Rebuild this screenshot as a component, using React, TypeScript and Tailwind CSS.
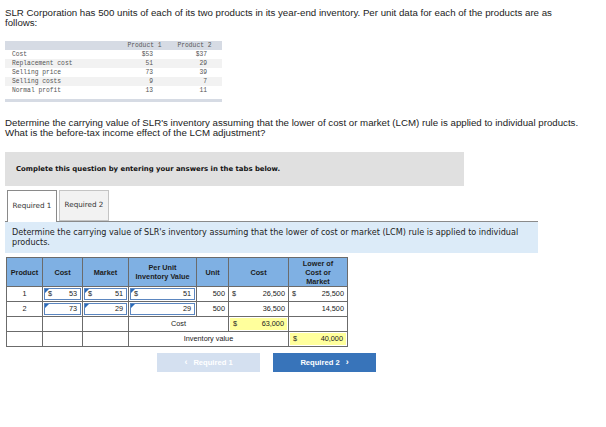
import React from "react"

const dataRows = [
  { label: "Cost", p1: "$53", p2: "$37" },
  { label: "Replacement cost", p1: "51", p2: "29" },
  { label: "Selling price", p1: "73", p2: "39" },
  { label: "Selling costs", p1: "9", p2: "7" },
  { label: "Normal profit", p1: "13", p2: "11" },
]

function Marker() {
  return (
    <span className="absolute left-0 top-0 w-0 h-0 border-t-[4px] border-r-[4px] border-t-[#2a6ab8] border-r-transparent" />
  )
}

function Input({ value, dollar }: { value: string; dollar?: boolean }) {
  return (
    <div className="relative m-[1px] h-[12px] border border-[#5b86c0] bg-white flex items-center justify-between px-[3px]">
      <Marker />
      <span>{dollar ? "$" : ""}</span>
      <span>{value}</span>
    </div>
  )
}

function Money({ value, dollar }: { value: string; dollar?: boolean }) {
  return (
    <div className="flex items-center justify-between px-[3px]">
      <span>{dollar ? "$" : ""}</span>
      <span>{value}</span>
    </div>
  )
}

function Yellow({ value }: { value: string }) {
  return (
    <div className="m-[1px] h-[12px] bg-[#ffff9c] flex items-center justify-between px-[3px]">
      <span>$</span>
      <span>{value}</span>
    </div>
  )
}

export default function App() {
  const cell = "border border-[#6b6b6b] p-0 h-[14.5px]"
  const head = "border border-[#6b6b6b] bg-[#7fb0e3] font-bold text-[#1c1c1c] leading-[9px]"

  return (
    <div className="w-[606px] h-[427px] bg-white px-[5px] pt-[8px] text-[#222]">
      <p className="w-[570px] font-['Liberation_Sans',sans-serif] text-[9.7px] leading-[10px]">
        SLR Corporation has 500 units of each of its two products in its year-end inventory. Per unit data for each of the products are as follows:
      </p>

      <div className="mt-[13px] w-[217px] font-['Liberation_Mono',monospace] text-[6.3px] text-[#555]">
        <div className="h-[9px] bg-[#d6dbe4] flex items-center">
          <span className="w-[117px]" />
          <span className="w-[45px] text-center">Product 1</span>
          <span className="w-[55px] text-center">Product 2</span>
        </div>
        {dataRows.map((r, i) => (
          <div key={r.label} className={`h-[9px] flex items-center ${i % 2 === 1 ? "bg-[#f2f2f2]" : "bg-white"}`}>
            <span className="w-[117px] pl-[7px]">{r.label}</span>
            <span className="w-[31px] text-right">{r.p1}</span>
            <span className="w-[54px] text-right">{r.p2}</span>
          </div>
        ))}
        <div className="mt-[4px] h-[3px] bg-[#d6dbe4]" />
      </div>

      <p className="mt-[16px] font-['Liberation_Sans',sans-serif] text-[9.7px] leading-[10px]">
        Determine the carrying value of SLR's inventory assuming that the lower of cost or market (LCM) rule is applied to individual products.
        <br />
        What is the before-tax income effect of the LCM adjustment?
      </p>

      <div className="mt-[14px] w-[459px] h-[34px] bg-[#e0e0e0] flex items-center pl-[11px] font-['DejaVu_Sans',sans-serif] font-bold text-[6.9px] text-[#111]">
        Complete this question by entering your answers in the tabs below.
      </div>

      <div className="mt-[4px] flex gap-[2px] pl-[2px] font-['DejaVu_Sans',sans-serif] text-[7.2px] text-[#333]">
        <div className="relative z-10 -mb-px w-[50px] h-[32px] bg-white border border-b-0 border-[#8a8a8a] flex items-center justify-center">
          Required 1
        </div>
        <div className="w-[50px] h-[31px] bg-[#f2f2f2] border border-[#c4c4c4] flex items-center justify-center">
          Required 2
        </div>
      </div>
      <div className="w-[533px] h-[32px] bg-[#dcebf8] border-t border-[#8a8a8a] px-[7px] pt-[5px] font-['DejaVu_Sans',sans-serif] text-[8.1px] leading-[10px] text-[#222]">
        Determine the carrying value of SLR's inventory assuming that the lower of cost or market (LCM) rule is applied to individual products.
      </div>

      <table className="mt-[4px] ml-px border-collapse font-['Liberation_Sans',sans-serif] text-[7.3px] text-[#222] table-fixed">
        <colgroup>
          <col className="w-[36px]" />
          <col className="w-[40px]" />
          <col className="w-[46px]" />
          <col className="w-[68px]" />
          <col className="w-[32px]" />
          <col className="w-[60px]" />
          <col className="w-[59px]" />
        </colgroup>
        <thead>
          <tr className="h-[29px]">
            <th className={head}>Product</th>
            <th className={head}>Cost</th>
            <th className={head}>Market</th>
            <th className={head}>Per Unit<br />Inventory Value</th>
            <th className={head}>Unit</th>
            <th className={head}>Cost</th>
            <th className={head}>Lower of<br />Cost or<br />Market</th>
          </tr>
        </thead>
        <tbody>
          <tr>
            <td className={`${cell} text-center`}>1</td>
            <td className={cell}><Input value="53" dollar /></td>
            <td className={cell}><Input value="51" dollar /></td>
            <td className={cell}><Input value="51" dollar /></td>
            <td className={`${cell} text-right pr-[3px]`}>500</td>
            <td className={cell}><Money value="26,500" dollar /></td>
            <td className={cell}><Money value="25,500" dollar /></td>
          </tr>
          <tr>
            <td className={`${cell} text-center`}>2</td>
            <td className={cell}><Input value="73" /></td>
            <td className={cell}><Input value="29" /></td>
            <td className={cell}><Input value="29" /></td>
            <td className={`${cell} text-right pr-[3px]`}>500</td>
            <td className={cell}><Money value="36,500" /></td>
            <td className={cell}><Money value="14,500" /></td>
          </tr>
          <tr>
            <td className={cell} />
            <td className={cell} />
            <td className={cell} />
            <td className={`${cell} text-center`} colSpan={2}>Cost</td>
            <td className={cell}><Yellow value="63,000" /></td>
            <td className={cell} />
          </tr>
          <tr>
            <td className={cell} />
            <td className={cell} />
            <td className={cell} />
            <td className={`${cell} text-center`} colSpan={3}>Inventory value</td>
            <td className={cell}><Yellow value="40,000" /></td>
          </tr>
        </tbody>
      </table>

      <div className="mt-[6px] ml-[152px] flex gap-[13px] font-['Liberation_Sans',sans-serif] font-bold text-[7.6px] text-white">
        <div className="w-[103px] h-[19px] bg-[#d4e0f0] flex items-center justify-center gap-[6px]">
          <span className="text-[9px]">‹</span>
          <span>Required 1</span>
        </div>
        <div className="w-[103px] h-[19px] bg-[#3874ba] flex items-center justify-center gap-[6px]">
          <span>Required 2</span>
          <span className="text-[9px]">›</span>
        </div>
      </div>
    </div>
  )
}
